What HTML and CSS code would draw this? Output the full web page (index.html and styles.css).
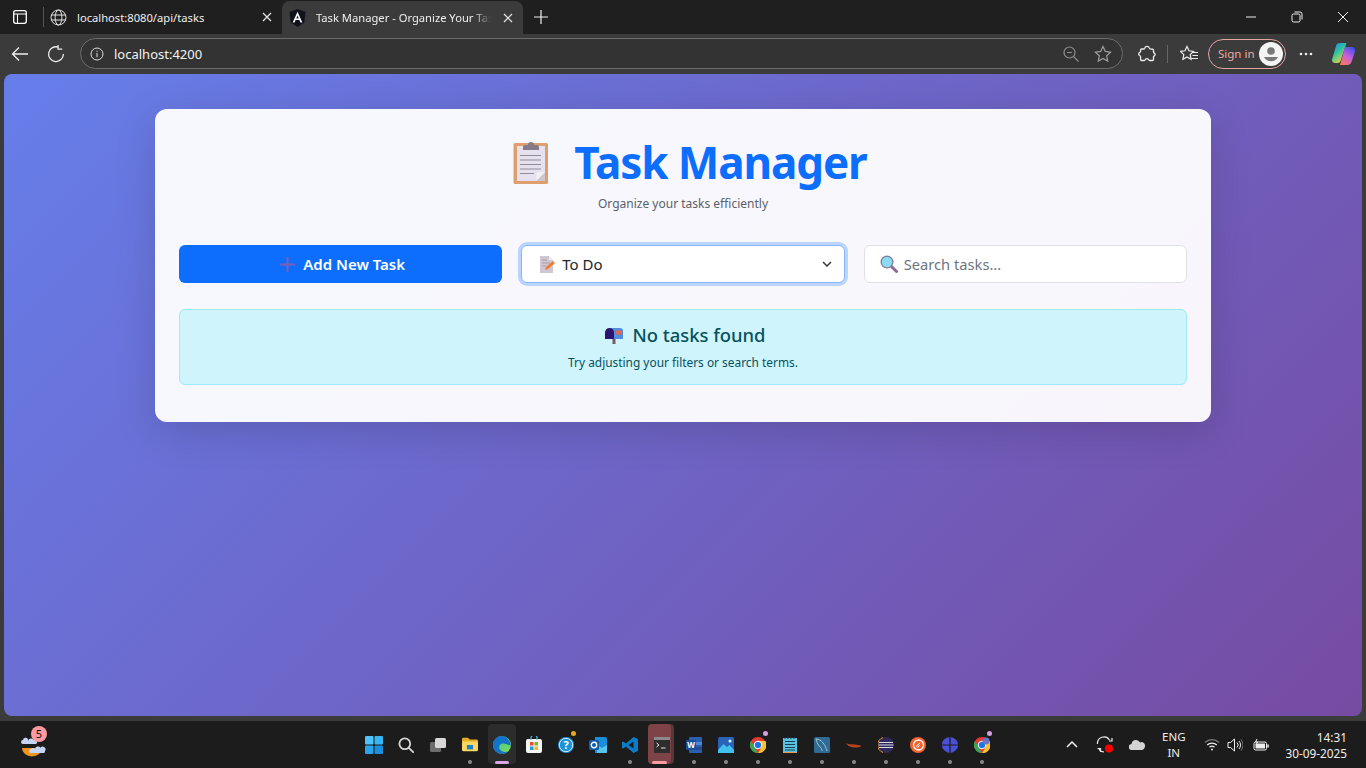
FILE: index.html
```html
<!DOCTYPE html>
<html lang="en">
<head>
    <meta charset="UTF-8">
    <meta name="viewport" content="width=device-width, initial-scale=1.0">
    <title>Task Manager - Organize Your Tasks</title>
    <link rel="stylesheet" href="styles.css">
</head>
<body>
    <!-- Browser tabs -->
    <div class="tab-strip">
        <svg class="sidebar-icon" width="16" height="16" viewBox="0 0 16 16" fill="none" stroke="#fff" stroke-width="1.3"><rect x="1.7" y="1.7" width="12.6" height="12.6" rx="2"/><path d="M2 5h12M5.5 5v9" stroke-width="1.1"/></svg>
        <span class="tab-sep"></span>
        <div class="tab">
            <svg class="favicon" width="17" height="17" viewBox="0 0 17 17" fill="none" stroke="#e6e6e6" stroke-width="1"><circle cx="8.5" cy="8.5" r="7.5"/><ellipse cx="8.5" cy="8.5" rx="3.4" ry="7.5"/><path d="M1.4 6h14.2M1.4 11h14.2"/></svg>
            <span class="tab-title">localhost:8080/api/tasks</span>
            <svg class="tab-close" width="10" height="10" viewBox="0 0 10 10" stroke="#e8e8e8" stroke-width="1.2"><path d="M1 1l8 8M9 1l-8 8"/></svg>
        </div>
        <div class="tab tab-active">
            <svg class="favicon" width="17" height="18" viewBox="0 0 17 18"><path d="M8.5 0L0.5 3l1.2 10.5L8.5 18l6.8-4.5L16.5 3z" fill="#11131c"/><path d="M8.5 2.8L3.7 13.6h1.9l1-2.5h3.8l1 2.5h1.9zM7.3 9.5l1.2-3 1.2 3z" fill="#fff"/></svg>
            <span class="tab-title fade">Task Manager - Organize Your Tasks</span>
            <svg class="tab-close" width="10" height="10" viewBox="0 0 10 10" stroke="#e8e8e8" stroke-width="1.2"><path d="M1 1l8 8M9 1l-8 8"/></svg>
        </div>
        <svg class="new-tab" width="14" height="14" viewBox="0 0 14 14" stroke="#f0f0f0" stroke-width="1.2"><path d="M7 0v14M0 7h14"/></svg>
        <div class="window-btns">
            <svg width="12" height="12" viewBox="0 0 12 12" stroke="#eee" stroke-width="1"><path d="M1 6h10"/></svg>
            <svg width="12" height="12" viewBox="0 0 12 12" fill="none" stroke="#eee" stroke-width="1"><rect x="1" y="3" width="8" height="8" rx="1.5"/><path d="M3.5 1h5.5a2 2 0 0 1 2 2v5.5"/></svg>
            <svg width="12" height="12" viewBox="0 0 12 12" stroke="#eee" stroke-width="1"><path d="M1 1l10 10M11 1L1 11"/></svg>
        </div>
    </div>

    <!-- Address bar -->
    <div class="toolbar">
        <svg class="tool-back" width="18" height="16" viewBox="0 0 18 16" fill="none" stroke="#eee" stroke-width="1.3"><path d="M17 8H1.5M8 1.5L1.5 8 8 14.5"/></svg>
        <svg class="tool-reload" width="18" height="18" viewBox="0 0 18 18" fill="none" stroke="#eee" stroke-width="1.3"><path d="M11.5 2.2A7.4 7.4 0 1 0 16.4 9"/><path d="M11 0v4.2h4.2" stroke-width="1.2"/></svg>
        <div class="address">
            <svg width="14" height="14" viewBox="0 0 14 14" fill="none" stroke="#ddd"><circle cx="7" cy="7" r="6"/><path d="M7 6v4.2M7 3.6v1.2"/></svg>
            <span class="url">localhost:4200</span>
            <svg class="addr-zoom" width="16" height="16" viewBox="0 0 16 16" fill="none" stroke="#8d8d8d" stroke-width="1.2"><circle cx="6.5" cy="6.5" r="5.5"/><path d="M10.5 10.5L15.5 15.5M4 6.5h5"/></svg>
            <svg width="18" height="18" viewBox="0 0 18 18" fill="none" stroke="#a0a0a0" stroke-width="1.2"><path d="M9 1.5l2.3 4.9 5.3.7-3.9 3.7 1 5.3L9 13.500l-4.700 2.600 1-5.300L1.400 7.100l5.300-.7z"/></svg>
        </div>
        <svg class="tool-ext" width="18" height="18" viewBox="0 0 18 18" fill="none" stroke="#eee" stroke-width="1.3"><path d="M6.800 3.200a2.300 2.300 0 0 1 4.500 0c.2.800.900.900 1.700.900h1.500a1 1 0 0 1 1 1V7c0 .7.700 1 1 1.200a1.800 1.800 0 0 1 0 2.600c-.3.200-1 .500-1 1.200v2.500a1 1 0 0 1-1 1h-2.800c-.7 0-1-.6-1.200-1a1.800 1.800 0 0 0-3.100 0c-.2.400-.5 1-1.200 1H3.600a1 1 0 0 1-1-1v-2.800c0-.7-.6-1-1-1.200a1.700 1.700 0 0 1 0-3c.4-.2 1-.5 1-1.200V5a1 1 0 0 1 1-1H5c.9 0 1.600-.1 1.800-.8z"/></svg>
        <span class="tool-sep"></span>
        <svg class="tool-fav" width="18" height="18" viewBox="0 0 18 18" fill="none" stroke="#eee" stroke-width="1.2"><path d="M7 1.500l2 4.300 4.500.6-3.300 3.200.9 4.700L7 12l-4.100 2.300.9-4.700L.5 6.400 5 5.800z"/><path d="M12.500 7.500H18M12.500 10.500H18M11.500 13.500H18" stroke-width="1"/></svg>
        <div class="signin">
            <span>Sign in</span>
            <span class="avatar"><svg width="24" height="24" viewBox="0 0 24 24"><circle cx="12" cy="12" r="12" fill="#f4f4f4"/><circle cx="12" cy="9" r="3.800" fill="#777"/><path d="M5 15h14a7.500 6.500 0 0 1-14 0z" fill="#777"/></svg></span>
        </div>
        <svg class="tool-more" width="14" height="4" viewBox="0 0 14 4" fill="#eee"><circle cx="2" cy="2" r="1.300"/><circle cx="7" cy="2" r="1.300"/><circle cx="12" cy="2" r="1.300"/></svg>
        <svg class="tool-copilot" width="23" height="22" viewBox="0 0 23 22">
            <defs>
                <linearGradient id="cpA" x1="0" y1="0" x2="0.6" y2="1"><stop offset="0" stop-color="#1a7ff0"/><stop offset=".5" stop-color="#2fc4a0"/><stop offset="1" stop-color="#f2d23a"/></linearGradient>
                <linearGradient id="cpB" x1="0.8" y1="0" x2="0.2" y2="1"><stop offset="0" stop-color="#3a50e6"/><stop offset=".5" stop-color="#c85ce0"/><stop offset="1" stop-color="#f47a5a"/></linearGradient>
            </defs>
            <path d="M8 0h6.500l-6 18a3 3 0 0 1-3 2H3a3 3 0 0 1-3-3.500L4 3a4 4 0 0 1 4-3z" fill="url(#cpA)"/>
            <path d="M13 4h6.500A3.500 3.500 0 0 1 23 8.500L19.500 19a4 4 0 0 1-3.500 3H8z" fill="url(#cpB)"/>
        </svg>
    </div>

    <!-- Page -->
    <main class="viewport">
        <div class="app-card">
            <header class="app-header">
                <h1>
                    <svg class="title-emoji" width="36" height="45" viewBox="0 0 36 45">
                        <rect x="0.500" y="3" width="34.500" height="41" rx="1.500" fill="#df9f6c"/>
                        <rect x="4" y="6" width="28" height="35" fill="#e5e1ee"/>
                        <path d="M32 32v9h-9z" fill="#cbc6cf"/>
                        <path d="M23 41l9-9h-8z" fill="#f2f0f6"/>
                        <path d="M10 7a2 2 0 0 1 2-2h3a3 3 0 0 1 6 0h3a2 2 0 0 1 2 2v3H10z" fill="#857b88"/>
                        <path d="M7 15.500h21M7 20h21M7 24.500h21M7 29h21M7 33.500h14" stroke="#928e99" stroke-width="1.200"/>
                    </svg>
                    <span>Task Manager</span>
                </h1>
                <p>Organize your tasks efficiently</p>
            </header>

            <div class="controls">
                <button class="btn-add" type="button">
                    <svg width="15" height="15" viewBox="0 0 15 15" fill="#7d5fb8"><path d="M6.500 0h2v6.500H15v2H8.500V15h-2V8.500H0v-2h6.500z"/></svg>
                    Add New Task
                </button>
                <div class="status-select">
                    <svg width="15" height="17" viewBox="0 0 15 17"><path d="M0 0h9l4 4v13H0z" fill="#cfc6d2"/><path d="M9 0l4 4H9z" fill="#efeaf0"/><path d="M2 4h5M2 7h8M2 10h4" stroke="#a99fad"/><path d="M5 14l1-3 7-6 2 2-7 6z" fill="#f07b35"/></svg>
                    <span>To Do</span>
                    <svg class="chevron" width="10" height="6" viewBox="0 0 10 6" fill="none" stroke="#343a40" stroke-width="1.500"><path d="M1 1l4 4 4-4"/></svg>
                </div>
                <label class="search-box">
                    <svg width="18" height="18" viewBox="0 0 18 18"><path d="M11 11l5.500 5.500" stroke="#8d6a96" stroke-width="3" stroke-linecap="round"/><circle cx="7" cy="7" r="6.500" fill="#7d7f96"/><circle cx="7" cy="7" r="5.200" fill="#8bdcf3"/></svg>
                    <input type="text" placeholder="Search tasks...">
                </label>
            </div>

            <div class="empty-alert">
                <h4>
                    <svg width="18" height="17" viewBox="0 0 18 17"><rect x="7.500" y="11" width="3" height="6" fill="#7d5760"/><path d="M5 1h10a3 3 0 0 1 3 3v8H9z" fill="#4f90de"/><path d="M4.500 1A4.500 4.500 0 0 1 9 5.500V12H0V5.500A4.500 4.500 0 0 1 4.500 1z" fill="#2a1670"/><rect x="11" y="3.500" width="5" height="4" fill="#e8654f"/></svg>
                    <span>No tasks found</span>
                </h4>
                <p>Try adjusting your filters or search terms.</p>
            </div>
        </div>
    </main>

    <!-- Windows taskbar -->
    <footer class="taskbar">
        <div class="weather">
            <svg width="28" height="24" viewBox="0 0 28 24">
                <path d="M2 15h20a10 8.500 0 0 1-20 0z" fill="#f0951f"/>
                <path d="M7 8a3 3 0 0 1 5.500-1A2.500 2.500 0 0 1 16 9.500a2 2 0 0 1-1 1.500H2a2 2 0 0 1 0-4 2.500 2.500 0 0 1 5 .5z" fill="#c6d6f2" transform="translate(1 0)"/>
                <path d="M15 16a3 3 0 0 1 5.500-1.200A2.500 2.500 0 0 1 25 18a2 2 0 0 1-1 2H11a2 2 0 0 1 0-4 2.500 2.500 0 0 1 4 0z" fill="#c6d6f2"/>
            </svg>
            <span class="weather-badge">5</span>
        </div>
        <div class="task-icons">
            <span class="task-icon"><svg width="18" height="18" viewBox="0 0 18 18"><rect width="8.500" height="8.500" rx="1" fill="#4fc3f7"/><rect x="9.500" width="8.500" height="8.500" rx="1" fill="#38b6f1"/><rect y="9.500" width="8.500" height="8.500" rx="1" fill="#2aa4e8"/><rect x="9.500" y="9.500" width="8.500" height="8.500" rx="1" fill="#1c8fdc"/></svg></span>
            <span class="task-icon"><svg width="16" height="16" viewBox="0 0 16 16" fill="none" stroke="#d6d6d6" stroke-width="1.800"><circle cx="6.800" cy="6.800" r="5.400"/><path d="M10.800 10.800l4.400 4.400" stroke-linecap="round"/></svg></span>
            <span class="task-icon"><svg width="16" height="14" viewBox="0 0 16 14"><rect y="4" width="11" height="10" rx="1.500" fill="#6d6d6d"/><rect x="5" width="11" height="10" rx="1.500" fill="#d8d8d8"/></svg></span>
            <span class="task-icon running"><svg width="16" height="15" viewBox="0 0 18 15"><path d="M0 1.500A1.500 1.500 0 0 1 1.500 0h5L9 2h7.500A1.500 1.500 0 0 1 18 3.500V5H0z" fill="#e5ac25"/><rect y="4" width="18" height="11" rx="1.500" fill="#fbd75f"/><rect x="5.500" y="8" width="7" height="5" fill="#1e82c8"/></svg></span>
            <span class="task-icon edge-tile"><svg width="18" height="18" viewBox="0 0 18 18"><defs><linearGradient id="edgeG" x1="0" y1="0" x2="1" y2="1"><stop offset="0" stop-color="#38c6a0"/><stop offset="1" stop-color="#7fdc55"/></linearGradient></defs><circle cx="9" cy="9" r="9" fill="url(#edgeG)"/><path d="M0 9a9 9 0 0 0 15 6.500c-3 1-7 .5-8.500-2.500-1-2 0-5 3-5.500 2.500-.4 4 .5 8.300 2.200C17 4 13 0 8.500 0 4 .2 0 4 0 9z" fill="#1273c9"/></svg></span>
            <span class="task-icon"><svg width="16" height="17" viewBox="0 0 16 17"><rect y="3" width="16" height="14" rx="2" fill="#f5f5f5"/><path d="M5 4V2a3 3 0 0 1 6 0v2" fill="none" stroke="#4fb8e8" stroke-width="1.200"/><rect x="4" y="6" width="3.500" height="3.500" fill="#ea4d2a"/><rect x="8.500" y="6" width="3.500" height="3.500" fill="#7cb927"/><rect x="4" y="10.500" width="3.500" height="3.500" fill="#1f9de0"/><rect x="8.500" y="10.500" width="3.500" height="3.500" fill="#fbb81b"/></svg></span>
            <span class="task-icon notify-gold"><svg width="16" height="16" viewBox="0 0 16 16"><circle cx="8" cy="8" r="8" fill="#1b94d8"/><circle cx="8" cy="8" r="6.700" fill="none" stroke="#fff" stroke-width=".8"/><text x="8" y="12" class="help-mark">?</text></svg></span>
            <span class="task-icon"><svg width="18" height="16" viewBox="0 0 18 16"><path d="M6 0h10a2 2 0 0 1 2 2v12a2 2 0 0 1-2 2H6z" fill="#1a8ed8"/><path d="M8 8l5 3 5-3v7a1 1 0 0 1-1 1H8z" fill="#57c6ef"/><rect y="3" width="10" height="10" rx="1.500" fill="#0f5cac"/><circle cx="5" cy="8" r="2.700" fill="none" stroke="#fff" stroke-width="1.400"/></svg></span>
            <span class="task-icon running"><svg width="16" height="16" viewBox="0 0 16 16"><path d="M11.500 0L16 2v12l-4.500 2L4 9.500 1.200 11.500 0 11V5l1.200-.5L4 6.500z" fill="#0a7cc9"/><path d="M11.500 4.500L6.500 8l5 3.500z" fill="#1c1c1c"/></svg></span>
            <span class="task-icon terminal-tile"><svg width="16" height="16" viewBox="0 0 16 16"><rect width="16" height="16" fill="#2d2d2d"/><rect width="16" height="3" fill="#8a8a8a"/><path d="M2.500 6l2.500 2-2.500 2" fill="none" stroke="#e6e6e6"/><path d="M7 11h4.500" stroke="#e6e6e6"/></svg></span>
            <span class="task-icon running"><svg width="16" height="16" viewBox="0 0 16 16"><rect x="3" width="13" height="16" rx="1" fill="#2a5fb0"/><rect x="8" y="5" width="8" height="3" fill="#4a8bd8"/><rect x="8" y="10" width="8" height="3" fill="#1f4a94"/><rect y="3" width="10" height="10" rx="1" fill="#1a4f9e"/><text x="5" y="11" class="word-mark">W</text></svg></span>
            <span class="task-icon running"><svg width="16" height="16" viewBox="0 0 16 16"><rect width="16" height="16" rx="1.500" fill="#2964b8"/><path d="M0 13l5.500-6 3.500 3 2.500-2 4.500 5v3H0z" fill="#3fc0ee"/><circle cx="12" cy="4" r="1.500" fill="#e6f3ff"/></svg></span>
            <span class="task-icon running notify-pink"><svg width="16" height="16" viewBox="0 0 16 16"><circle cx="8" cy="8" r="8" fill="#e5382f"/><path d="M8 16a8 8 0 0 1-7-12l4 7z" fill="#36a853"/><path d="M8 16l3.500-5.500L8 4h7.500A8 8 0 0 1 8 16z" fill="#fbc02d"/><circle cx="8" cy="8" r="3.800" fill="#1a73e8" stroke="#fff" stroke-width="1"/></svg></span>
            <span class="task-icon running"><svg width="14" height="16" viewBox="0 0 14 16"><rect y="1" width="14" height="15" fill="#5bc0de"/><path d="M2 4.500h10M2 7.500h10M2 10.500h10M2 13h10" stroke="#173f55"/><path d="M0 15h14v1H0z" fill="#e89a4c"/><path d="M2 0v2M5 0v2M8 0v2M11 0v2" stroke="#173f55"/></svg></span>
            <span class="task-icon running"><svg width="16" height="16" viewBox="0 0 16 16"><rect width="16" height="16" rx="1.500" fill="#2e6c95"/><path d="M2 2c5 0 9 5 11 12M2 2c1 4 2 6 5 9 1 1 1 2 1 3" fill="none" stroke="#c2d4de" stroke-width=".8"/></svg></span>
            <span class="task-icon running"><svg width="16" height="6" viewBox="0 0 16 6"><path d="M0 1l2 1c4 .5 9 0 14 2-4 2-9 2-12 .5C2 4 1 3 0 1z" fill="#b8411e"/></svg></span>
            <span class="task-icon running"><svg width="16" height="16" viewBox="0 0 16 16"><circle cx="8" cy="8" r="8" fill="#2f2a5c"/><path d="M1 5.500h14M.500 8h15M1 10.500h14" stroke="#dcdce6" stroke-width="1.200"/><path d="M5 .5a8 8 0 0 0 0 15" fill="none" stroke="#e6902c"/></svg></span>
            <span class="task-icon running"><svg width="16" height="16" viewBox="0 0 16 16"><circle cx="8" cy="8" r="8" fill="#f0622e"/><circle cx="8.500" cy="8" r="5" fill="none" stroke="#fff" stroke-width="1.300"/><path d="M6 9.500L10 6M7 11l3-3" stroke="#fff"/></svg></span>
            <span class="task-icon running"><svg width="16" height="16" viewBox="0 0 16 16" fill="#4b50d8"><path d="M7.400 0v7.400H0C0 4 2.500 1 7.400 0zM8.600 0C13 1 16 4 16 7.400H8.600zM0 8.600h7.400V16C3 15 0 12 0 8.600zM8.600 8.600H16C16 12 13 15 8.600 16z"/></svg></span>
            <span class="task-icon running notify-pink"><svg width="16" height="16" viewBox="0 0 16 16"><circle cx="8" cy="8" r="8" fill="#e5382f"/><path d="M8 16a8 8 0 0 1-7-12l4 7z" fill="#36a853"/><path d="M8 16l3.500-5.500L8 4h7.500A8 8 0 0 1 8 16z" fill="#fbc02d"/><circle cx="8" cy="8" r="3.800" fill="#1a73e8" stroke="#fff" stroke-width="1"/><circle cx="12" cy="4" r="3.500" fill="#6a74c8"/></svg></span>
        </div>
        <div class="tray">
            <svg class="tray-chevron" width="12" height="7" viewBox="0 0 12 7" fill="none" stroke="#eee" stroke-width="1.500"><path d="M1 6l5-5 5 5"/></svg>
            <span class="tray-sync"><svg width="18" height="18" viewBox="0 0 18 18" fill="none" stroke="#eee" stroke-width="1.200"><path d="M1.500 8A6.500 6.500 0 0 1 13.500 4M16 2v3h-3M1.500 12.500h3V16M3 13a6 6 0 0 0 5 3"/><circle cx="13" cy="12.500" r="4" fill="#f00" stroke="none"/></svg></span>
            <svg class="tray-cloud" width="16" height="11" viewBox="0 0 16 11"><path d="M3 11a3 3 0 0 1-.5-6A4.500 4.500 0 0 1 11 3.500 3.500 3.500 0 0 1 16 7c0 2.200-1.500 4-3.500 4z" fill="#d4d4d4"/></svg>
            <div class="tray-lang"><span>ENG</span><span>IN</span></div>
            <svg class="tray-wifi" width="16" height="13" viewBox="0 0 16 13" fill="none" stroke="#eee" stroke-width="1.200"><path d="M1 4.500a10 10 0 0 1 14 0" stroke="#777"/><path d="M3.200 7a7 7 0 0 1 9.600 0M5.500 9.300a3.700 3.700 0 0 1 5 0"/><circle cx="8" cy="11.500" r="1" fill="#eee" stroke="none"/></svg>
            <svg class="tray-vol" width="16" height="14" viewBox="0 0 16 14" fill="none" stroke="#eee" stroke-width="1"><path d="M1 4.500h2.500L7.500 1v12L3.500 9.500H1z"/><path d="M10 4.500a3.500 3.500 0 0 1 0 5M12 3a6 6 0 0 1 0 8"/><path d="M14 1.500a8.500 8.500 0 0 1 0 11" stroke="#777"/></svg>
            <svg class="tray-batt" width="16" height="12" viewBox="0 0 16 12" fill="none" stroke="#eee" stroke-width="1"><rect x="1" y="3" width="12.500" height="8" rx="1.500"/><path d="M15 5.500v3" stroke-width="1.500"/><rect x="2.500" y="4.500" width="9.500" height="5" fill="#eee" stroke="none"/><path d="M4 0L2.500 3h2L3 6" stroke-width="1"/></svg>
            <div class="tray-clock"><span>14:31</span><span>30-09-2025</span></div>
        </div>
    </footer>
</body>
</html>
```
FILE: styles.css
```css
* {
    box-sizing: border-box;
}

html, body {
    height: 100%;
    margin: 0;
    overflow: hidden;
}

body {
    display: flex;
    flex-direction: column;
    background-color: #3b3b3b;
    font-family: 'Noto Sans', 'Open Sans', sans-serif;
}

/* browser frame */
.tab-strip {
    display: flex;
    align-items: center;
    height: 34px;
    background-color: #1f1f1f;
    color: #eee;
    font-size: 11.200px;
}

.sidebar-icon {
    margin-left: 12px;
}

.tab-sep {
    width: 1px;
    height: 20px;
    margin-left: 15px;
    background-color: #555;
}

.tab {
    display: flex;
    align-items: center;
    height: 33px;
    margin-top: 1px;
    margin-bottom: 1px;
    padding: 0 10px 0 6px;
    width: 238px;
}

.tab .favicon {
    flex: none;
    margin-right: 10px;
}

.tab-title {
    flex: 1;
    overflow: hidden;
    white-space: nowrap;
}

.tab-title.fade {
    -webkit-mask-image: linear-gradient(to right, #000 90%, transparent 100%);
    mask-image: linear-gradient(to right, #000 90%, transparent 100%);
}

.tab-close {
    flex: none;
    margin-left: 12px;
}

.tab-active {
    width: 241px;
    margin-bottom: 0;
    padding-left: 7px;
    background-color: #3b3b3b;
    border-radius: 8px 8px 0 0;
}

.new-tab {
    margin-left: 11px;
}

.window-btns {
    display: flex;
    gap: 34px;
    margin-left: auto;
    padding-right: 17px;
}

.toolbar {
    display: flex;
    align-items: center;
    height: 40px;
    padding-bottom: 1px;
}

.tool-back {
    margin-left: 11px;
}

.tool-reload {
    margin-left: 18px;
}

.address {
    display: flex;
    align-items: center;
    width: 1043px;
    height: 31px;
    margin-left: 15px;
    padding: 0 10px 0 9px;
    background-color: #333;
    border: 1px solid #6c6c6c;
    border-radius: 16px;
}

.url {
    margin-left: 10px;
    color: #f2f2f2;
    font-size: 13px;
}

.addr-zoom {
    margin-left: auto;
    margin-right: 15px;
}

.tool-ext {
    margin-left: 15px;
}

.tool-sep {
    width: 1px;
    height: 18px;
    margin-left: 11px;
    background-color: #666;
}

.tool-fav {
    margin-left: 12px;
}

.signin {
    display: flex;
    align-items: center;
    justify-content: space-between;
    width: 78px;
    height: 30px;
    margin-left: 10px;
    padding: 0 2px 0 9px;
    border: 1px solid #e2a5a0;
    border-radius: 15px;
    color: #f0a8a2;
    font-size: 11.500px;
}

.avatar {
    display: flex;
}

.tool-more {
    margin-left: 13px;
}

.tool-copilot {
    margin-left: 19px;
}

/* page */
.viewport {
    flex: 1;
    margin: 0 4px 5px;
    padding-top: 35px;
    border-radius: 8px;
    background: linear-gradient(135deg, #667eea 0%, #764ba2 100%);
}

.app-card {
    width: 1056px;
    margin: 0 auto;
    padding: 24px;
    background: rgba(255, 255, 255, 0.95);
    border-radius: 12px;
    box-shadow: 0 10px 40px rgba(0, 0, 0, 0.15);
}

.app-header {
    text-align: center;
    margin-bottom: 32px;
}

.app-header h1 {
    display: flex;
    align-items: center;
    justify-content: center;
    gap: 25px;
    margin: 0;
    padding-left: 14px;
    color: #0d6efd;
    font-size: 44px;
    font-weight: 700;
    letter-spacing: -1.100px;
    line-height: 58px;
}

.app-header p {
    margin: 4px 0 0;
    color: #5b6168;
    font-size: 12px;
    line-height: 18px;
}

.controls {
    display: grid;
    grid-template-columns: repeat(3, 1fr);
    gap: 19px;
    margin-bottom: 26px;
}

.btn-add {
    display: flex;
    align-items: center;
    justify-content: center;
    gap: 8px;
    height: 38px;
    padding: 0 0 0 4px;
    background-color: #0d6efd;
    color: #fff;
    border: none;
    border-radius: 6px;
    font-family: inherit;
    font-size: 15px;
    font-weight: 600;
}

.status-select {
    display: flex;
    align-items: center;
    gap: 7px;
    height: 38px;
    padding: 0 12px 0 18px;
    background-color: #fff;
    color: #212529;
    border: 1px solid #86b7fe;
    border-radius: 6px;
    box-shadow: 0 0 0 3px rgba(13, 110, 253, 0.25);
    font-size: 15px;
}

.chevron {
    margin-left: auto;
}

.search-box {
    display: flex;
    align-items: center;
    gap: 6px;
    height: 38px;
    padding: 0 12px 0 15px;
    background-color: #fff;
    border: 1px solid #dee2e6;
    border-radius: 6px;
}

.search-box input {
    flex: 1;
    min-width: 0;
    padding: 0;
    border: none;
    outline: none;
    background: none;
    font-family: inherit;
    font-size: 14.700px;
}

.search-box input::placeholder {
    color: #6c757d;
}

.empty-alert {
    height: 76px;
    margin-bottom: 13px;
    padding-top: 12px;
    background-color: #cff4fc;
    color: #055160;
    border: 1px solid #9eeaf9;
    border-radius: 6px;
    text-align: center;
}

.empty-alert h4 {
    display: flex;
    align-items: center;
    justify-content: center;
    gap: 9px;
    margin: 0;
    padding-left: 5px;
    font-size: 18.400px;
    font-weight: 500;
    line-height: 26px;
}

.empty-alert p {
    margin: 6px 0 0;
    font-size: 11.900px;
    line-height: 17px;
}

/* taskbar */
.taskbar {
    display: flex;
    align-items: center;
    height: 47px;
    background-color: #1c1c1c;
    color: #eee;
}

.weather {
    position: relative;
    display: flex;
    flex: none;
    width: 358px;
    padding-left: 20px;
}

.weather-badge {
    position: absolute;
    top: -7px;
    left: 31px;
    width: 16px;
    height: 16px;
    border-radius: 50%;
    background-color: #ff9aa2;
    color: #111;
    font-size: 11px;
    line-height: 16px;
    text-align: center;
}

.task-icons {
    display: flex;
    flex: none;
}

.task-icon {
    position: relative;
    display: flex;
    align-items: center;
    justify-content: center;
    width: 32px;
    height: 47px;
}

.task-icon.running::after {
    content: "";
    position: absolute;
    left: 14px;
    bottom: 4px;
    width: 4px;
    height: 4px;
    border-radius: 50%;
    background-color: #8a8a8a;
}

.edge-tile::before {
    content: "";
    position: absolute;
    top: 3px;
    left: 2px;
    width: 28px;
    height: 40px;
    border-radius: 4px;
    background-color: #2c2c2c;
}

.edge-tile svg {
    position: relative;
}

.edge-tile::after {
    content: "";
    position: absolute;
    left: 9px;
    bottom: 4px;
    width: 14px;
    height: 3px;
    border-radius: 2px;
    background-color: #d9a6e6;
}

.terminal-tile::before {
    content: "";
    position: absolute;
    top: 3px;
    left: 2px;
    width: 23px;
    height: 40px;
    border-radius: 4px;
    background-color: #7d4347;
    box-shadow: 3px 0 0 #5a3638;
}

.terminal-tile svg {
    position: relative;
}

.terminal-tile::after {
    content: "";
    position: absolute;
    left: 6px;
    bottom: 4px;
    width: 15px;
    height: 3px;
    border-radius: 2px;
    background-color: #ff9aa2;
}

.notify-gold::before,
.notify-pink::before {
    content: "";
    position: absolute;
    top: 10px;
    right: 6px;
    width: 5px;
    height: 5px;
    border-radius: 50%;
}

.notify-gold::before {
    background-color: #e8a91e;
}

.notify-pink::before {
    z-index: 1;
    background-color: #d3a0e0;
}

.help-mark {
    fill: #fff;
    font-size: 11px;
    font-weight: 700;
    text-anchor: middle;
}

.word-mark {
    fill: #fff;
    font-size: 8px;
    font-weight: 700;
    text-anchor: middle;
}

.tray {
    position: relative;
    display: flex;
    flex: 1;
    align-items: center;
    height: 47px;
    font-size: 11.500px;
}

.tray-chevron {
    margin-left: 68px;
}

.tray-sync {
    display: flex;
    margin-left: 18px;
}

.tray-cloud {
    margin-left: 15px;
}

.tray-lang {
    display: flex;
    flex-direction: column;
    align-items: center;
    margin-left: 17px;
    line-height: 16px;
}

.tray-wifi {
    margin-left: 18px;
}

.tray-vol {
    margin-left: 7px;
}

.tray-batt {
    margin-left: 10px;
}

.tray-clock {
    display: flex;
    flex-direction: column;
    align-items: flex-end;
    margin-left: auto;
    padding-right: 19px;
    font-size: 11.800px;
    line-height: 16px;
}
```
